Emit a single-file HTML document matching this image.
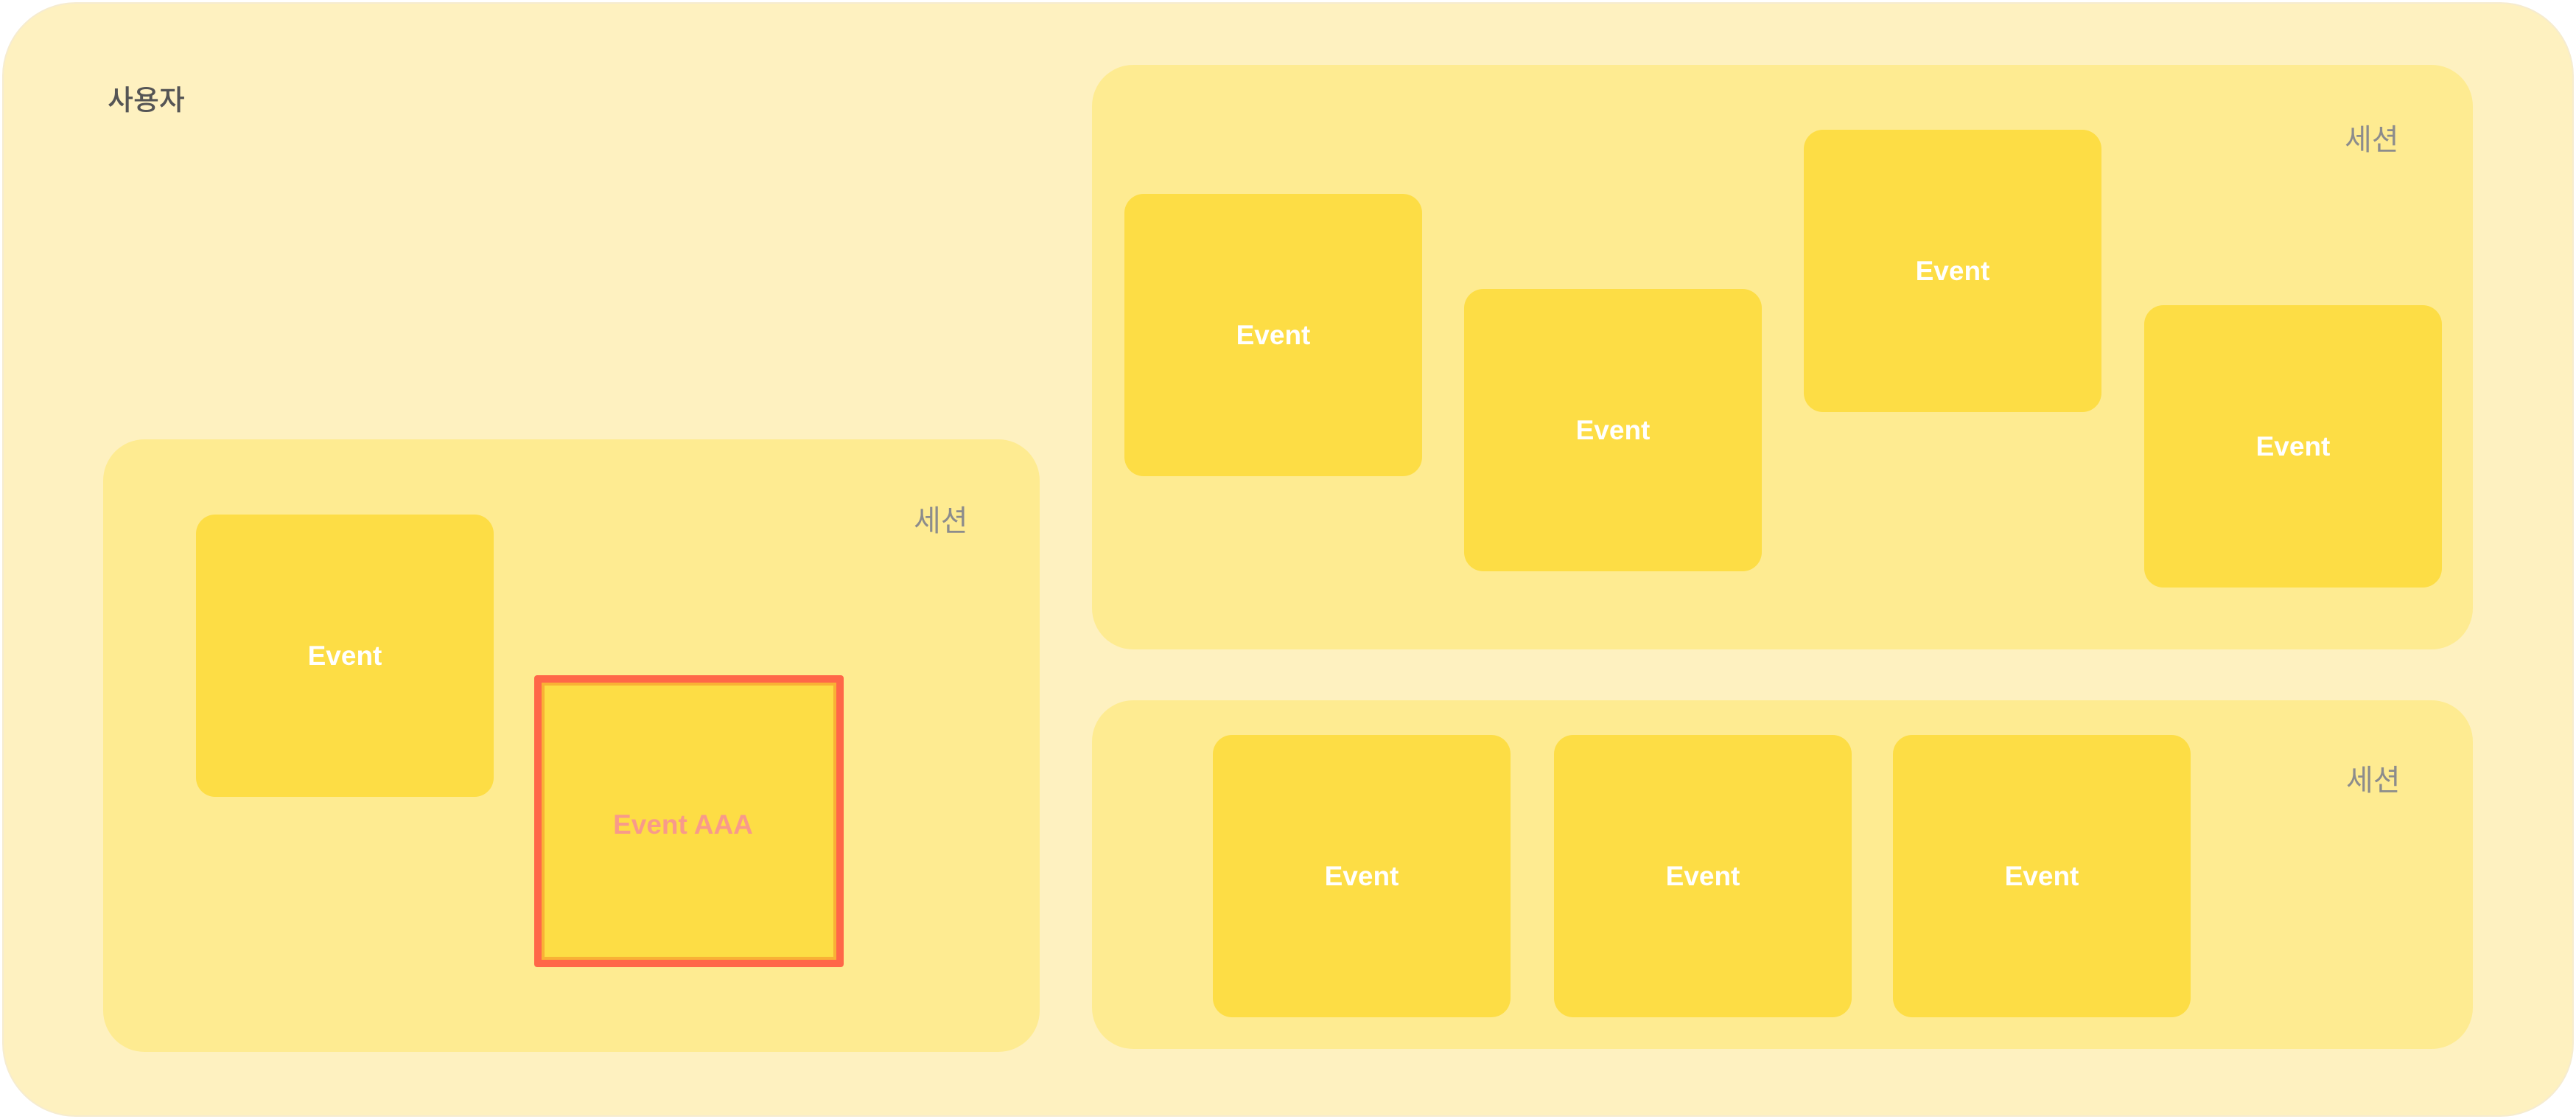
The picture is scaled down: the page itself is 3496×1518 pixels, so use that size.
<!DOCTYPE html>
<html><head><meta charset="utf-8"><style>
html,body{margin:0;padding:0;background:#fff;width:3496px;height:1518px;overflow:hidden;font-family:"Liberation Sans","Noto Sans CJK KR",sans-serif}
div{position:absolute;box-sizing:border-box}
.outer{left:3px;top:3px;width:3490px;height:1512px;background:#FEF1C0;border-radius:100px;border:2px solid #f6ecd0}
.sec{background:#FEEB91;border-radius:56px}
.ev{background:#FDDD45;border-radius:26px;width:404px;height:383px;display:flex;align-items:center;justify-content:center;color:#fff;font-weight:bold;font-size:37px}
.lbl{color:#8c8c8c;font-size:40px;font-weight:normal;font-family:"Noto Sans CJK KR",sans-serif;line-height:1}
</style></head><body>
<div class="outer"></div>
<div style="left:146px;top:114px;color:#555;font-size:38px;font-weight:500;font-family:'Noto Sans CJK KR',sans-serif;line-height:1">사용자</div>
<div class="sec" style="left:1482px;top:88px;width:1874px;height:793px"></div>
<div class="sec" style="left:1482px;top:950px;width:1874px;height:473px"></div>
<div class="sec" style="left:140px;top:596px;width:1271px;height:831px"></div>
<div class="lbl" style="left:3182px;top:166px">세션</div>
<div class="lbl" style="left:1240px;top:683px">세션</div>
<div class="lbl" style="left:3184px;top:1035px">세션</div>
<div class="ev" style="left:1526px;top:263px">Event</div>
<div class="ev" style="left:1987px;top:392px">Event</div>
<div class="ev" style="left:2448px;top:176px">Event</div>
<div class="ev" style="left:2910px;top:414px">Event</div>
<div class="ev" style="left:1646px;top:997px">Event</div>
<div class="ev" style="left:2109px;top:997px">Event</div>
<div class="ev" style="left:2569px;top:997px">Event</div>
<div class="ev" style="left:266px;top:698px">Event</div>
<div style="left:725px;top:916px;width:420px;height:396px;border:10px solid #FF6748;background:#FDDD45;border-radius:4px;box-shadow:inset 0 0 0 4px #F9B135"></div>
<div style="left:725px;top:926px;width:404px;height:376px;display:flex;align-items:center;justify-content:center;color:#F89A8A;font-weight:bold;font-size:37px;padding-top:10px">Event AAA</div>
</body></html>
